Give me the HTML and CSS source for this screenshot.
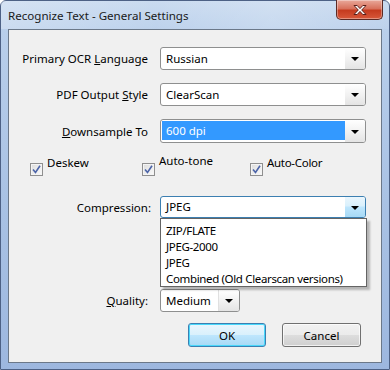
FILE: index.html
```html
<!DOCTYPE html>
<html>
<head>
<meta charset="utf-8">
<link rel="stylesheet" href="styles.css">
</head>
<body>
<div class="window">
  <div class="titlebar">
    <span class="title">Recognize Text - General Settings</span>
    <div class="close">
      <svg width="16" height="12" viewBox="0 0 16 12"><path d="M2 1.5h3.2L8 4.6l2.8-3.1H14L9.7 6 14 10.5h-3.2L8 7.4l-2.8 3.1H2L6.3 6z" fill="#fff" stroke="#5a1d18" stroke-width="1" stroke-linejoin="round"/></svg>
    </div>
  </div>
  <div class="client">
    <div class="row r-first">
      <span class="lbl">Primary OCR <u>L</u>anguage</span>
      <div class="combo"><span class="val">Russian</span><span class="drop"><i class="arrow"></i></span></div>
    </div>
    <div class="row">
      <span class="lbl">PDF Output <u>S</u>tyle</span>
      <div class="combo"><span class="val">ClearScan</span><span class="drop"><i class="arrow"></i></span></div>
    </div>
    <div class="row">
      <span class="lbl"><u>D</u>ownsample To</span>
      <div class="combo sel"><span class="val">600 dpi</span><span class="drop"><i class="arrow"></i></span></div>
    </div>
    <div class="checks">
      <div class="chk c1"><span class="box"><svg width="9" height="9" viewBox="0 0 9 9"><path d="M1 4.5l2.5 3L8 0.8" fill="none" stroke="#4c64a8" stroke-width="1.6"/></svg></span><span class="ct">Deskew</span></div>
      <div class="chk c2"><span class="box"><svg width="9" height="9" viewBox="0 0 9 9"><path d="M1 4.5l2.5 3L8 0.8" fill="none" stroke="#4c64a8" stroke-width="1.6"/></svg></span><span class="ct up">Auto-tone</span></div>
      <div class="chk c3"><span class="box"><svg width="9" height="9" viewBox="0 0 9 9"><path d="M1 4.5l2.5 3L8 0.8" fill="none" stroke="#4c64a8" stroke-width="1.6"/></svg></span><span class="ct tight">Auto-Color</span></div>
    </div>
    <div class="row r-comp">
      <span class="lbl lbl-comp">Compression:</span>
      <div class="combo focus">
        <span class="val">JPEG</span><span class="drop"><i class="arrow"></i></span>
        <div class="list">
          <div class="item">ZIP/FLATE</div>
          <div class="item">JPEG-2000</div>
          <div class="item">JPEG</div>
          <div class="item">Combined (Old Clearscan versions)</div>
        </div>
      </div>
    </div>
    <div class="row r-qual">
      <span class="lbl"><u>Q</u>uality:</span>
      <div class="combo small"><span class="val">Medium</span><span class="drop"><i class="arrow"></i></span></div>
    </div>
    <div class="buttons">
      <div class="btn ok">OK</div>
      <div class="btn">Cancel</div>
    </div>
  </div>
</div>
</body>
</html>
```
FILE: styles.css
```css
* { box-sizing: border-box; }
html, body { margin: 0; padding: 0; }
body {
  width: 390px; height: 370px; overflow: hidden;
  font-family: "Noto Sans", "Open Sans", sans-serif;
  font-size: 11.5px; color: #000;
  background: #fff;
}
.window {
  width: 390px; height: 370px;
  border: 1px solid #4d6185;
  border-radius: 6px 6px 0 0;
  background: linear-gradient(180deg, #c7d9ef 0px, #b9cfeb 30px, #a9c2e4 200px, #9db7df 370px);
  display: flex; flex-direction: column;
  position: relative;
}
.titlebar {
  height: 28px;
  display: flex; align-items: center;
  padding-left: 7px;
  background: linear-gradient(90deg, rgba(255,255,255,0.25), rgba(255,255,255,0.05) 40%, rgba(255,255,255,0.2) 70%, rgba(255,255,255,0.05));
}
.title { color: #1a1a1a; font-size: 11.6px; margin-top: 1px; }
.close {
  position: absolute; right: 6px; top: -1px;
  width: 47px; height: 20px;
  border: 1px solid #5c2a24; border-top: none;
  border-radius: 0 0 5px 5px;
  background: linear-gradient(180deg, #e9a99b 0%, #d8715c 45%, #c53b1f 55%, #d7583a 100%);
  box-shadow: inset 0 0 0 1px rgba(255,255,255,0.35);
  display: flex; align-items: center; justify-content: center;
}
.client {
  margin: 0 7px 0 7px;
  height: 334px;
  border: 1px solid #6b7889;
  background: #f0f0f0;
  padding: 17px 0 0 0;
  position: relative;
}
.row { display: flex; align-items: center; margin-bottom: 13px; }
.lbl { width: 139px; text-align: right; margin-right: 12px; white-space: nowrap; }
.combo {
  width: 206px; height: 23px;
  border: 1px solid #8e8f8f;
  border-radius: 3px;
  background: #fff;
  display: flex; position: relative;
}
.val { flex: 1; padding-left: 5px; line-height: 21px; }
.drop {
  width: 20px; display: flex; align-items: center; justify-content: center;
  background: linear-gradient(180deg, #ffffff 0%, #f2f2f2 50%, #e4e4e4 100%);
  border-radius: 0 2px 2px 0;
}
.arrow {
  width: 0; height: 0;
  border-left: 4px solid transparent; border-right: 4px solid transparent;
  border-top: 4px solid #000;
  margin-top: 1px;
}
.combo.sel { height: 24px; }
.combo.sel .val {
  background: #3399ff; color: #fff;
  margin: 1px 0 2px 1px; line-height: 19px; padding-left: 4px;
}
.checks { position: relative; height: 40px; margin-top: 0; }
.chk { position: absolute; top: -1px; display: flex; align-items: flex-start; }
.c1 { left: 21px; } .c2 { left: 133px; } .c3 { left: 241px; }
.box {
  width: 13px; height: 13px; margin-top: 8px; margin-right: 4px;
  border: 1px solid #8f8f8f;
  background: linear-gradient(135deg, #dcdcdc, #fbfbfb);
  box-shadow: inset 0 0 0 1px #f4f4f4;
  display: flex; align-items: center; justify-content: center;
}
.ct { line-height: 16px; }
.ct.up { margin-top: -2px; }
.ct.tight { letter-spacing: -0.3px; }
.r-comp { margin-bottom: 0; height: 22px; }
.lbl-comp { margin-right: 9px; width: 142px; }
.combo.focus { height: 22px; border-color: #3c7fb1; }
.combo.focus .val { padding-left: 5px; line-height: 20px; }
.combo.focus .drop {
  background: linear-gradient(180deg, #eaf6fd 0%, #d9f0fc 45%, #bee6fd 50%, #a7d9f5 100%);
}
.list {
  position: absolute; left: -1px; top: 21px;
  width: 207px; height: 69px;
  background: #fff;
  border: 1px solid #646464;
  padding: 4px 0 0 5px;
  box-shadow: 3px 3px 2px rgba(0,0,0,0.25);
  z-index: 2;
}
.item { line-height: 16px; white-space: nowrap; letter-spacing: -0.35px; }
.r-qual { margin-top: 71px; margin-bottom: 0; }
.combo.small { width: 80px; }
.combo.small .drop { width: 21px; border-left: 1px solid #e0e0e0; }
.buttons { display: flex; justify-content: flex-end; gap: 16px; margin: 11px 20px 0 0; }
.btn {
  width: 79px; height: 24px;
  border: 1px solid #707070; border-radius: 3px;
  background: linear-gradient(180deg, #f2f2f2 0%, #ebebeb 50%, #dddddd 51%, #cfcfcf 100%);
  box-shadow: inset 0 0 0 1px rgba(255,255,255,0.7);
  display: flex; align-items: center; justify-content: center;
}
.btn.ok {
  width: 78px;
  border-color: #3c7fb1;
  background: linear-gradient(180deg, #eaf6fd 0%, #d9f0fc 50%, #bee6fd 51%, #a7d9f5 100%);
  box-shadow: inset 0 0 0 1px #48d8fb;
}
```
